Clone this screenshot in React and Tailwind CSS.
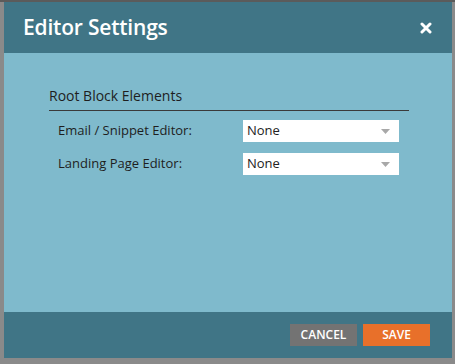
import React from 'react';

const font = { fontFamily: '"Open Sans", "Liberation Sans", sans-serif' };

function SelectBox({ value }) {
  return (
    <div className="w-[156px] h-[22px] bg-white flex items-center justify-between pl-[4px] pr-[9px]">
      <span className="text-[13px] text-[#222]">{value}</span>
      <svg width="9" height="5" viewBox="0 0 9 5"><path d="M0 0h9L4.5 5z" fill="#a8a8a8" /></svg>
    </div>
  );
}

export default function App() {
  return (
    <div className="w-[455px] h-[364px] bg-[#8a8a8a] border-t-2 border-[#5b5b5b] pl-[4px] pr-[3px] pb-[6px] flex" style={font}>
      <div className="flex-1 flex flex-col bg-[#7fbacc]">
        {/* header */}
        <div className="h-[51px] bg-[#407586] flex items-center justify-between pl-[19px] pr-[20px]">
          <h1 className="text-[21px] font-semibold text-white tracking-[-0.2px]">Editor Settings</h1>
          <svg width="12" height="12" viewBox="0 0 12 12">
            <path d="M2 2l8 8M10 2l-8 8" stroke="#fff" strokeWidth="3" strokeLinecap="round" />
          </svg>
        </div>

        {/* body */}
        <div className="flex-1 pt-[32px] pl-[45px] pr-[43px]">
          <div className="text-[14px] text-[#1e1e1e] pb-[4px] border-b border-[#3a3a3a]">Root Block Elements</div>
          <div className="pl-[9px] pt-[9px] flex flex-col gap-[11px]">
            <div className="flex items-center justify-between pr-[10px]">
              <span className="text-[13px] text-[#1e1e1e]">Email / Snippet Editor:</span>
              <SelectBox value="None" />
            </div>
            <div className="flex items-center justify-between pr-[10px]">
              <span className="text-[13px] text-[#1e1e1e]">Landing Page Editor:</span>
              <SelectBox value="None" />
            </div>
          </div>
        </div>

        {/* footer */}
        <div className="h-[46px] bg-[#407586] flex items-center justify-end gap-[6px] pr-[22px]">
          <button className="w-[67px] h-[22px] bg-[#737373] text-white text-[12px] font-semibold">CANCEL</button>
          <button className="w-[67px] h-[22px] bg-[#e8702a] text-white text-[12px] font-semibold">SAVE</button>
        </div>
      </div>
    </div>
  );
}
